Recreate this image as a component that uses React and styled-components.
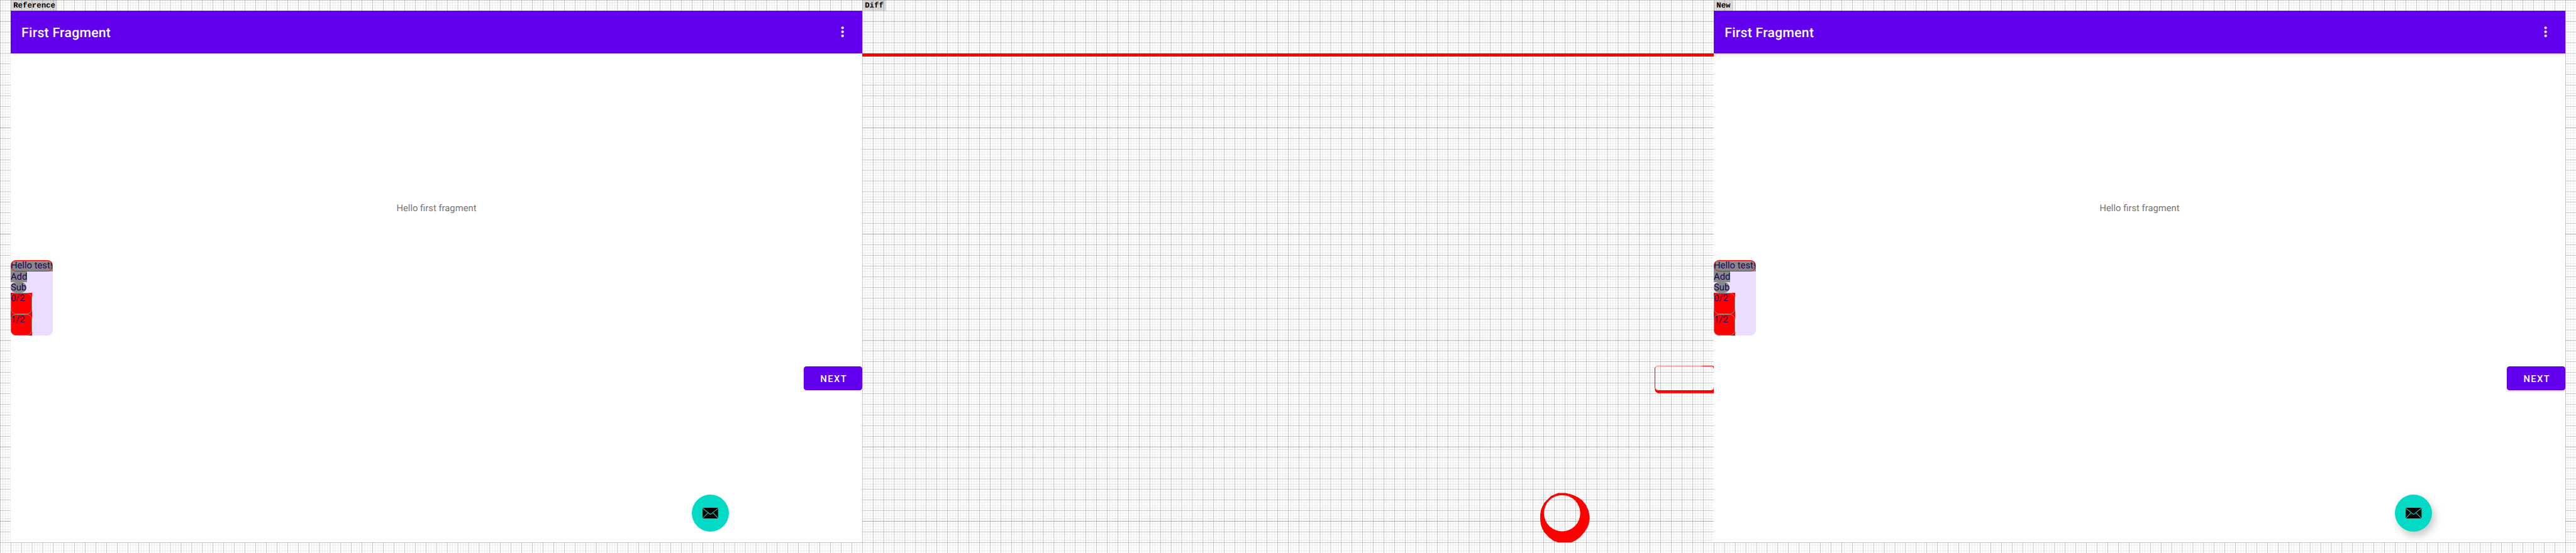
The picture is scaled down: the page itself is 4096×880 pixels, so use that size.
import React from "react";
import styled, { createGlobalStyle, css } from "styled-components";

const SCALE = 4096 / 7744;
const u = (n) => `${(n * SCALE).toFixed(3)}px`;

const WIDTH = 7744;
const HEIGHT = 1664;

const GlobalStyle = createGlobalStyle`
  * { box-sizing: border-box; }
  html, body { margin: 0; padding: 0; background: #fff; overflow: hidden; }
  body { font-family: Roboto, sans-serif; text-rendering: geometricPrecision; }
`;

const Sheet = styled.main`
  position: relative;
  width: 4096px;
  height: 880px;
  overflow: hidden;
  background: #fff;
`;

const GridPaper = styled.svg`
  position: absolute;
  inset: 0;
  width: ${u(WIDTH)};
  height: ${u(HEIGHT)};
`;

const Columns = styled.div`
  position: relative;
  display: grid;
  grid-template-columns: repeat(3, ${u(2560)});
  padding: 0 ${u(32)};
`;

const Column = styled.section`
  display: flex;
  flex-direction: column;
`;

const LabelRow = styled.header`
  display: flex;
  align-items: flex-end;
  height: ${u(32)};
`;

const Label = styled.span`
  display: flex;
  align-items: flex-end;
  width: ${(p) => u(p.$width)};
  height: ${(p) => u(p.$height)};
  padding-left: ${u(8)};
  background: rgba(0, 0, 0, 0.133);
  color: #000;
  font: bold ${u(23.4)} / ${u(28)} "Liberation Mono", monospace;
  white-space: nowrap;
`;

const Screen = styled.div`
  display: flex;
  flex-direction: column;
  height: ${u(1600)};
  overflow: hidden;
  background: #fff;
`;

const AppBar = styled.div`
  position: relative;
  display: flex;
  flex: none;
  align-items: center;
  justify-content: space-between;
  height: ${u(128)};
  padding: 0 ${u(36)} 0 ${u(32.5)};
  background: #6200ee;
  ${(p) => p.$raised && css`box-shadow: 0 ${u(3)} ${u(10)} rgba(0, 0, 0, 0.14);`}
`;

const Title = styled.h1`
  margin: 0;
  padding-top: ${u(7)};
  color: #fff;
  font-size: ${u(40)};
  font-weight: 500;
  letter-spacing: ${u(0.53)};
  line-height: ${u(48)};
`;

const MenuIcon = styled.svg`
  display: block;
  width: ${u(48)};
  height: ${u(48)};
  fill: #fff;
`;

const Content = styled.div`
  display: flex;
  flex-direction: column;
  align-items: flex-start;
`;

const Greeting = styled.p`
  align-self: center;
  margin: ${u(450.5)} 0 0;
  color: #757575;
  font-size: ${u(28)};
  line-height: ${u(33)};
`;

const Card = styled.div`
  display: flex;
  flex-direction: column;
  align-items: flex-start;
  width: ${u(126)};
  height: ${u(227)};
  margin-top: ${u(139.5)};
  overflow: hidden;
  border-radius: ${u(16)};
  background: #eaddff;
  color: #21005d;
  font-size: ${u(28)};
  line-height: ${u(33)};
  white-space: nowrap;
`;

const Chip = styled.span`
  position: relative;
  width: ${(p) => u(p.$width)};
  height: ${u(33)};
  border-radius: ${(p) => (p.$round ? u(16) : 0)};
  background: #888;

  ${(p) => p.$outlined && css`
    &::after {
      content: "";
      position: absolute;
      inset: 0;
      border: ${u(2)} solid #f00;
      border-radius: ${u(16)};
    }
  `}
`;

const Cell = styled.span`
  position: relative;
  width: ${u(64)};
  height: ${u(64)};
  background: #f00;

  &::after {
    content: "";
    position: absolute;
    inset: 0;
    border: ${u(2)} solid #888;
    border-radius: ${u(16)};
  }
`;

const NextButton = styled.button`
  align-self: flex-end;
  width: ${u(176)};
  height: ${u(72)};
  margin-top: ${u(92)};
  padding: ${u(7.5)} 0 0 ${u(5)};
  border: 0;
  border-radius: ${u(8)};
  background: #6200ee;
  color: #fff;
  font: 500 ${u(28)} / ${u(33)} Roboto, sans-serif;
  letter-spacing: ${u(2.7)};
  text-align: center;
  ${(p) => p.$raised && css`box-shadow: 0 ${u(3)} ${u(6)} rgba(0, 0, 0, 0.16);`}
`;

const MailButton = styled.button`
  display: flex;
  align-items: center;
  justify-content: center;
  width: ${u(112)};
  height: ${u(112)};
  margin: ${u(314)} 0 0 ${u(2048)};
  padding: 0;
  border: 0;
  border-radius: 50%;
  background: #03dac5;
  ${(p) => p.$raised && css`box-shadow: ${u(8)} ${u(13)} ${u(24)} rgba(0, 0, 0, 0.22);`}
`;

const MailIcon = styled.svg`
  display: block;
  width: ${u(48)};
  height: ${u(33.3)};
`;

const DiffScreen = styled.div`
  display: flex;
  flex-direction: column;
  height: ${u(1600)};
  padding-top: ${u(128)};
`;

const DiffBar = styled.div`
  flex: none;
  height: ${u(10)};
  background: #f00;
`;

const DiffShapes = styled.svg`
  display: block;
  flex: none;
  width: ${u(2560)};
  height: ${u(1462)};
  fill: #f00;
`;

function gridPath(length, span, vertical, major) {
  let d = "";
  for (let p = 0; p < length; p += 8) {
    if ((p % 32 === 0) !== major) continue;
    d += vertical ? `M${p} 0h1v${span}h-1z` : `M0 ${p}h${span}v1h${-span}z`;
  }
  return d;
}

function Grid() {
  return (
    <GridPaper viewBox={`0 0 ${WIDTH} ${HEIGHT}`} preserveAspectRatio="none">
      {[false, true].map((major) => (
        <g key={String(major)} fill={major ? "rgba(80,80,80,0.6)" : "rgba(0,0,0,0.12)"}>
          <path d={gridPath(WIDTH, HEIGHT, true, major)} />
          <path d={gridPath(HEIGHT, WIDTH, false, major)} />
        </g>
      ))}
    </GridPaper>
  );
}

function AppScreen({ raised }) {
  return (
    <Screen>
      <AppBar $raised={raised}>
        <Title>First Fragment</Title>
        <MenuIcon viewBox="0 0 24 24">
          <circle cx="12" cy="6" r="2" />
          <circle cx="12" cy="12" r="2" />
          <circle cx="12" cy="18" r="2" />
        </MenuIcon>
      </AppBar>
      <Content>
        <Greeting>Hello first fragment</Greeting>
        <Card>
          <Chip $width={126} $outlined>Hello test!</Chip>
          <Chip $width={50}>Add</Chip>
          <Chip $width={47.5} $round>Sub</Chip>
          <Cell>0/2</Cell>
          <Cell>1/2</Cell>
        </Card>
        <NextButton $raised={raised}>NEXT</NextButton>
        <MailButton $raised={raised} aria-label="Mail">
          <MailIcon viewBox="0 0 144 100">
            <rect width="144" height="100" rx="5" fill="#000" />
            <g fill="none" stroke="#03dac5" strokeWidth="6">
              <path d="M0 3L64 55Q72 63 80 55L144 3" />
              <path d="M1 97L49 46M143 97L95 46" />
            </g>
          </MailIcon>
        </MailButton>
      </Content>
    </Screen>
  );
}

export default function App() {
  return (
    <>
      <GlobalStyle />
      <Sheet>
        <Grid />
        <Columns>
          <Column>
            <LabelRow><Label $width={140} $height={32}>Reference</Label></LabelRow>
            <AppScreen />
          </Column>
          <Column>
            <LabelRow><Label $width={71} $height={32}>Diff</Label></LabelRow>
            <DiffScreen>
              <DiffBar />
              <DiffShapes viewBox="2592 170 2560 1462">
                <path
                  fillRule="evenodd"
                  d="M4980 1101H5117V1100H5147L5148 1101H5152V1110L5150 1104L5146 1102H4980L4976 1107V1167L4979 1172L4984 1174H5144L5151 1171V1166H5152V1183H4984L4978 1179L4975 1174V1167H4974V1107Z"
                />
                <path
                  fillRule="evenodd"
                  d="M4684 1483H4706.7L4720 1486.3L4731.7 1490L4743.3 1496L4756.7 1505.3L4767.3 1518.3L4775 1535L4778.7 1553V1562L4776 1576.7L4771.7 1587.7L4762 1602.3L4750 1616L4736.7 1626L4723.3 1632H4685L4671.7 1627.7L4657.3 1617.3L4641.7 1600.7L4636 1589.3L4632.7 1580L4630.3 1565V1546.7L4632.7 1533.3L4637.3 1522L4642.7 1511.7L4645.3 1509.3L4662.7 1492ZM4641.5 1544a54.5 54.5 0 1 0 109 0a54.5 54.5 0 1 0 -109 0Z"
                />
              </DiffShapes>
            </DiffScreen>
          </Column>
          <Column>
            <LabelRow><Label $width={58} $height={30}>New</Label></LabelRow>
            <AppScreen raised />
          </Column>
        </Columns>
      </Sheet>
    </>
  );
}
